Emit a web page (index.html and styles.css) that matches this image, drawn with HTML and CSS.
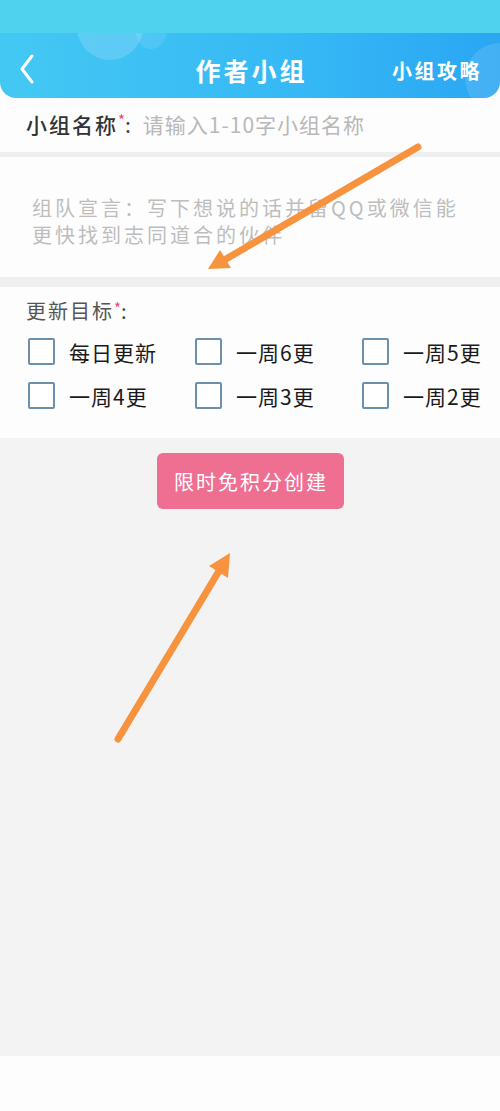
FILE: index.html
```html
<!DOCTYPE html>
<html lang="zh">
<head>
<meta charset="utf-8">
<title>作者小组</title>
<link rel="stylesheet" href="styles.css">
</head>
<body>
<div class="page">
  <div class="top">
    <div class="status"></div>
    <div class="navbar">
      <span class="deco deco-a"></span>
      <span class="deco deco-b"></span>
      <span class="deco deco-c"></span>
      <svg class="back" width="16" height="30" viewBox="0 0 16 30"><polyline points="13,2 3,15 13,28" fill="none" stroke="#ffffff" stroke-width="3" stroke-linecap="round" stroke-linejoin="round"/></svg>
      <div class="title">作者小组</div>
      <div class="guide">小组攻略</div>
    </div>
  </div>

  <div class="name-row">
    <span class="label">小组名称</span><span class="star">*</span><span class="colon">:</span>
    <span class="placeholder">请输入1-10字小组名称</span>
  </div>
  <div class="divider thin"></div>
  <div class="intro">
    <div class="intro-line">组队宣言：写下想说的话并留QQ或微信能</div>
    <div class="intro-line">更快找到志同道合的伙伴</div>
  </div>
  <div class="divider thick"></div>

  <div class="target">
    <div class="target-label">更新目标<span class="star">*</span><span class="colon">:</span></div>
    <div class="options">
      <label class="opt"><span class="box"></span><span>每日更新</span></label>
      <label class="opt"><span class="box"></span><span>一周6更</span></label>
      <label class="opt"><span class="box"></span><span>一周5更</span></label>
      <label class="opt"><span class="box"></span><span>一周4更</span></label>
      <label class="opt"><span class="box"></span><span>一周3更</span></label>
      <label class="opt"><span class="box"></span><span>一周2更</span></label>
    </div>
  </div>

  <div class="main">
    <button class="create">限时免积分创建</button>
  </div>
  <div class="footer"></div>

  <svg class="arrows" width="500" height="1111" viewBox="0 0 500 1111">
    <line x1="418" y1="147" x2="226" y2="259" stroke="#f7923f" stroke-width="7" stroke-linecap="round"/>
    <polygon points="208,269 231,268 220,250" fill="#f7923f"/>
    <line x1="118" y1="739" x2="219" y2="571" stroke="#f7923f" stroke-width="7" stroke-linecap="round"/>
    <polygon points="230,553 228,578 209,566" fill="#f7923f"/>
  </svg>
</div>
</body>
</html>
```

FILE: styles.css
```css
* { box-sizing: border-box; }
html, body { margin: 0; padding: 0; }
body {
  font-family: "Noto Sans CJK SC", "Noto Sans", sans-serif;
  background: #fdfdfd;
}
.page {
  position: relative;
  width: 500px;
  height: 1111px;
  overflow: hidden;
  display: flex;
  flex-direction: column;
}
.top { background: #fdfdfd; }
.status { height: 33px; background: #4fd2ee; }
.navbar {
  position: relative;
  height: 65px;
  overflow: hidden;
  border-radius: 0 0 16px 16px;
  background: linear-gradient(90deg, #44c8f3 0%, #36b8f5 60%, #2aa6f3 100%);
  display: flex;
  align-items: center;
  padding: 9px 20px 0 19px;
}
.deco {
  position: absolute;
  border-radius: 50%;
  background: rgba(255, 255, 255, 0.16);
}
.deco-a { left: 77px; top: -39px; width: 66px; height: 66px; }
.deco-b { left: 135px; top: -24px; width: 32px; height: 40px; background: rgba(255,255,255,0.1); }
.deco-c { left: 465px; top: 10px; width: 70px; height: 70px; background: rgba(255,255,255,0.12); }
.back { position: relative; flex: none; margin-top: -3px; }
.title {
  position: absolute;
  left: 0; right: 0;
  top: 9px; bottom: 0;
  display: flex;
  align-items: center;
  justify-content: center;
  color: #ffffff;
  font-size: 25px;
  font-weight: 700;
  letter-spacing: 3px;
  padding-left: 3px;
}
.guide {
  position: relative;
  margin-left: auto;
  color: #ffffff;
  font-size: 20px;
  font-weight: 700;
  letter-spacing: 2.5px;
  margin-right: -2px;
}
.name-row {
  height: 54px;
  background: #fdfdfd;
  display: flex;
  align-items: center;
  padding: 0 0 3px 26px;
  font-size: 21px;
  letter-spacing: 2px;
}
.label { color: #333333; font-weight: 500; }
.star { color: #e64b73; font-size: 15px; align-self: center; margin-top: -8px; letter-spacing: 0; }
.colon { color: #444; margin-right: 12px; letter-spacing: 0; }
.placeholder { color: #b8b8b8; letter-spacing: 1px; }
.divider { background: #efefef; }
.divider.thin { height: 5px; }
.divider.thick { height: 10px; }
.intro {
  height: 120px;
  background: #fdfdfd;
  padding: 36px 0 0 32px;
  color: #bdbdbd;
  font-size: 20px;
  line-height: 29px;
  letter-spacing: 3px;
}
.intro-line { height: 27px; }
.target {
  background: #fdfdfd;
  padding: 11px 0 29px 26px;
}
.target-label {
  color: #555555;
  font-size: 20px;
  line-height: 26px;
  letter-spacing: 2px;
  display: flex;
  align-items: center;
}
.target-label .star { margin-top: -6px; }
.options {
  margin-top: 14px;
  display: grid;
  grid-template-columns: 167px 167px 140px;
  row-gap: 17px;
  padding-left: 2px;
}
.opt {
  display: flex;
  align-items: center;
  gap: 14px;
  height: 27px;
  color: #1a1a1a;
  font-size: 21px;
  letter-spacing: 1px;
}
.box {
  flex: none;
  width: 27px;
  height: 27px;
  border: 2px solid #6c8fae;
  border-radius: 2px;
  background: #ffffff;
}
.main {
  flex: 1;
  background: #f3f3f3;
  display: flex;
  flex-direction: column;
  align-items: center;
  padding-top: 15px;
}
.create {
  width: 187px;
  height: 56px;
  border: none;
  border-radius: 6px;
  background: #ee6f92;
  color: #ffffff;
  font-family: "Noto Sans CJK SC", sans-serif;
  font-size: 20px;
  letter-spacing: 2px;
  padding: 0 0 0 2px;
}
.footer { height: 55px; background: #fdfdfd; flex: none; }
.arrows {
  position: absolute;
  left: 0;
  top: 0;
  pointer-events: none;
}
```
